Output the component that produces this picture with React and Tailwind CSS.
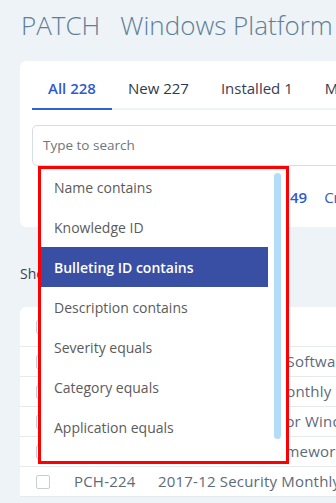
import React from 'react';

const options = [
  'Name contains',
  'Knowledge ID',
  'Bulleting ID contains',
  'Description contains',
  'Severity equals',
  'Category equals',
  'Application equals',
  'Approved State equals',
];

const rows = [
  { id: 'PCH-228', title: 'Windows Firewall Software Update' },
  { id: 'PCH-227', title: '2018-1 Security Monthly Quality Rollup' },
  { id: 'PCH-226', title: 'Jan 2018 Update for Windows 10' },
  { id: 'PCH-225', title: 'Microsoft.NET Framework 4.7.2' },
  { id: 'PCH-224', title: '2017-12 Security Monthly Quality Rollup' },
];

const Checkbox = () => (
  <div className="w-[14px] h-[14px] border border-[#c9ced4] rounded-[2px] bg-white shrink-0" />
);

const App = () => {
  const selected = 2;

  return (
    <div className="w-[336px] h-[503px] overflow-hidden bg-[#eef3f7] relative font-['Open_Sans',sans-serif]">
      {/* Page title */}
      <h1 className="pl-[21px] pt-[9px] h-[41px] text-[26px] leading-8 font-light text-[#5f7f96] whitespace-nowrap">
        PATCH<span className="ml-[20px]">Windows Platform</span>
      </h1>

      {/* Filter card */}
      <div className="ml-5 mt-5 w-[380px] bg-white rounded-tl-md rounded-bl-md px-3 pb-5">
        <div className="flex pt-[17px] border-b-2 border-[#eef3f7] whitespace-nowrap text-[15px] leading-5">
          <div className="px-4 pb-[10px] -mb-[2px] border-b-2 border-[#2f62d3] text-[#2f5bd0] font-semibold">All 228</div>
          <div className="px-4 pb-[10px] text-[#2e3a4b]">New 227</div>
          <div className="px-4 pb-[10px] text-[#3a3c52]">Installed 1</div>
          <div className="px-4 pb-[10px] text-[#2e3a4b]">Missing 0</div>
        </div>

        <div className="mt-[15px] h-[41px] border border-[#d8dde2] rounded-[5px] flex items-center px-[10px] text-[13.5px] text-[#70757d]">
          Type to search
        </div>

        <div className="mt-[21px] h-5 flex items-center text-[15px] leading-5 whitespace-nowrap">
          <span className="w-[258px] shrink-0 pl-3 text-[#6b7480]">Severity: Important</span>
          <span className="text-[#2f5bd0] font-semibold">49</span>
          <span className="ml-[17px] text-[#2f5bd0]">Critical 12</span>
        </div>
      </div>

      {/* Results */}
      <div className="pl-5 mt-[37px] text-[14px] leading-5 text-[#3d3f52] whitespace-nowrap">
        Showing 1 to 10 of 228 entries
      </div>

      <div className="ml-5 mt-[23px] w-[380px] bg-white rounded-tl-md text-[15px] tracking-[0.2px] text-[#5d6a7a] whitespace-nowrap">
        <div className="h-10 flex items-center pl-4 border-b border-[#e6eaee]">
          <Checkbox />
          <span className="ml-[24px] w-[84px] shrink-0 font-semibold text-[#3d4652]">ID</span>
          <span className="font-semibold text-[#3d4652]">Title</span>
        </div>
        {rows.map((r) => (
          <div key={r.id} className="h-[30px] flex items-center pl-4 border-b border-[#e6eaee]">
            <Checkbox />
            <span className="ml-[24px] w-[84px] shrink-0">{r.id}</span>
            <span>{r.title}</span>
          </div>
        ))}
      </div>

      {/* Filter field dropdown */}
      <div className="absolute left-[38px] top-[166px] w-[251px] h-[298px] border-[3px] border-[#ff0000] bg-white overflow-hidden">
        <div className="-mt-[2px]">
          {options.map((o, i) => (
            <div
              key={o}
              className={`h-10 w-[227px] flex items-center pl-[13px] text-[14px] whitespace-nowrap ${
                i === selected ? 'bg-[#394fa4] text-white font-semibold' : 'text-[#5b5b5b]'
              }`}
            >
              {o}
            </div>
          ))}
        </div>
        <div className="absolute left-[233px] top-[4px] w-[7px] h-[266px] rounded-full bg-[#b4dcf6]" />
      </div>
    </div>
  );
};

export default App;
